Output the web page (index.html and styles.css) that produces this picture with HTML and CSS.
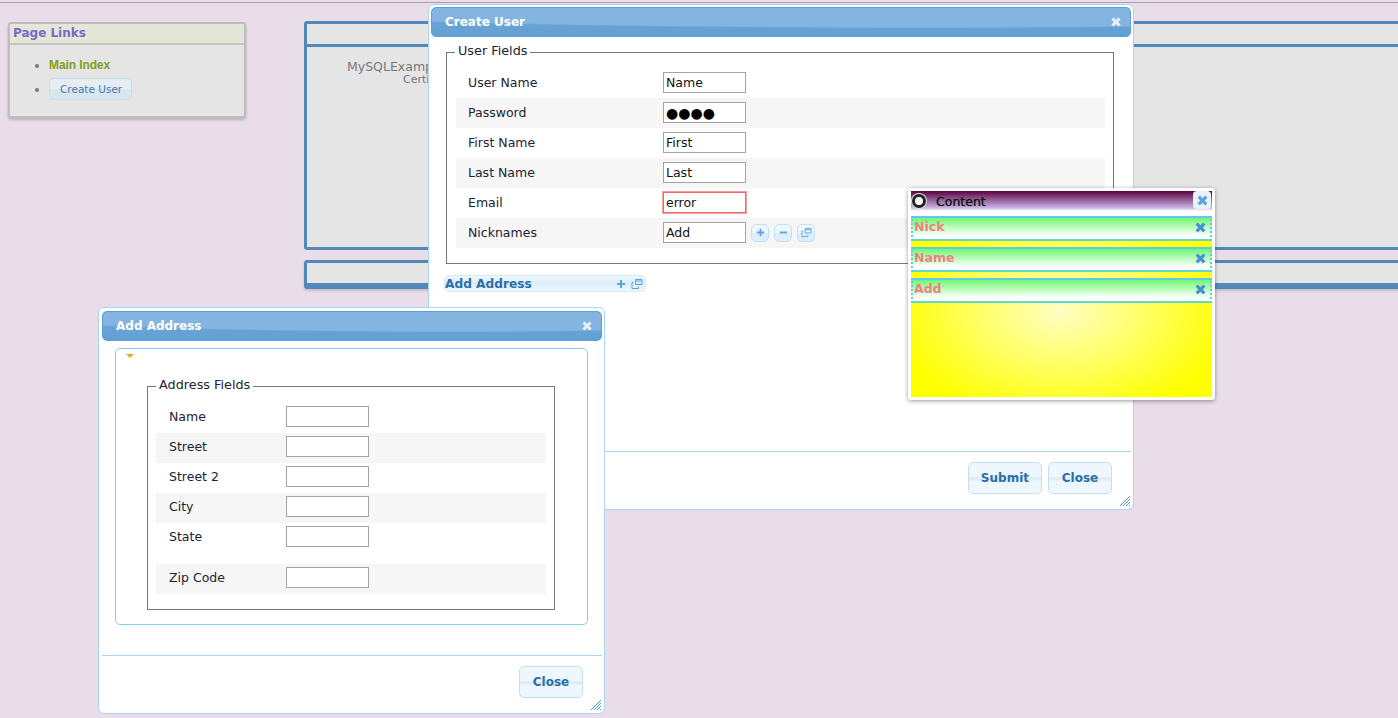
FILE: index.html
```html
<!DOCTYPE html>
<html lang="en">
<head>
  <meta charset="UTF-8">
  <title>Create User</title>
  <link rel="stylesheet" href="styles.css">
</head>
<body>
  <svg class="defs" width="0" height="0">
    <symbol id="i-close" viewBox="0 0 12 12"><path d="M2.500 2.500l7 7M9.500 2.500l-7 7" fill="none" stroke="currentColor" stroke-width="3"/></symbol>
    <symbol id="i-plus" viewBox="0 0 12 12"><path d="M6 2v8M2 6h8" fill="none" stroke="currentColor" stroke-width="2"/></symbol>
    <symbol id="i-minus" viewBox="0 0 12 12"><path d="M2 6h8" fill="none" stroke="currentColor" stroke-width="2"/></symbol>
    <symbol id="i-window" viewBox="0 0 12 12"><path d="M4.500 1.500h6.500v5h-6.500zM4.500 3h6.500M2.500 4.500h-1.500v6h6.500v-2" fill="none" stroke="currentColor"/></symbol>
    <symbol id="i-grip" viewBox="0 0 12 12"><path d="M1 11l10-10M4 11l7-7M7 11l4-4M10 11l1-1" fill="none" stroke="currentColor"/></symbol>
  </svg>

  <div class="top-rule"></div>
  <div class="page">
    <aside class="links">
      <h3 class="links-head">Page Links</h3>
      <ul class="links-list">
        <li><a class="link-main" href="#">Main Index</a></li>
        <li><a class="btn btn-small" href="#">Create User</a></li>
      </ul>
    </aside>
    <main class="content">
      <div class="panel">
        <div class="panel-head"></div>
        <div class="panel-body">
          <div class="app-name">MySQLExample</div>
          <div class="app-sub">Certificate</div>
        </div>
      </div>
      <div class="panel panel-foot"></div>
    </main>
  </div>

  <section class="dialog dialog-user">
    <header class="titlebar">
      <span>Create User</span>
      <svg class="title-close"><use href="#i-close"/></svg>
    </header>
    <div class="dialog-body">
      <fieldset class="fields">
        <legend>User Fields</legend>
        <div class="row"><label>User Name</label><input value="Name"></div>
        <div class="row"><label>Password</label><input class="dots" value="●●●●"></div>
        <div class="row"><label>First Name</label><input value="First"></div>
        <div class="row"><label>Last Name</label><input value="Last"></div>
        <div class="row"><label>Email</label><input class="error" value="error"></div>
        <div class="row">
          <label>Nicknames</label><input value="Add">
          <span class="tool"><svg><use href="#i-plus"/></svg></span>
          <span class="tool"><svg><use href="#i-minus"/></svg></span>
          <span class="tool"><svg><use href="#i-window"/></svg></span>
        </div>
      </fieldset>
      <div class="add-bar">
        <span class="add-name">Add Address</span>
        <svg class="add-icon"><use href="#i-plus"/></svg>
        <svg class="add-icon"><use href="#i-window"/></svg>
      </div>
    </div>
    <footer class="dialog-foot">
      <button class="btn">Submit</button>
      <button class="btn">Close</button>
    </footer>
    <svg class="grip"><use href="#i-grip"/></svg>
  </section>

  <section class="dialog dialog-address">
    <header class="titlebar">
      <span>Add Address</span>
      <svg class="title-close"><use href="#i-close"/></svg>
    </header>
    <div class="dialog-body">
      <div class="accordion">
        <span class="caret"></span>
        <fieldset class="fields">
          <legend>Address Fields</legend>
          <div class="row"><label>Name</label><input></div>
          <div class="row"><label>Street</label><input></div>
          <div class="row"><label>Street 2</label><input></div>
          <div class="row"><label>City</label><input></div>
          <div class="row row-tall"><label>State</label><input></div>
          <div class="row"><label>Zip Code</label><input></div>
        </fieldset>
      </div>
    </div>
    <footer class="dialog-foot">
      <button class="btn">Close</button>
    </footer>
    <svg class="grip"><use href="#i-grip"/></svg>
  </section>

  <section class="popup">
    <div class="popup-head">
      <span class="radio"></span>
      <span class="popup-title">Content</span>
      <span class="popup-close"><svg><use href="#i-close"/></svg></span>
    </div>
    <ul class="chips">
      <li class="chip"><span>Nick</span><svg><use href="#i-close"/></svg></li>
      <li class="chip"><span>Name</span><svg><use href="#i-close"/></svg></li>
      <li class="chip"><span>Add</span><svg><use href="#i-close"/></svg></li>
    </ul>
  </section>
</body>
</html>
```

FILE: styles.css
```css
html, body {
  margin: 0;
  padding: 0;
  height: 718px;
  overflow: hidden;
}

body {
  background: #e8dde8;
  font-family: "DejaVu Sans", sans-serif;
  font-size: 12px;
  color: #223;
  position: relative;
}

.defs {
  position: absolute;
}

.top-rule {
  height: 1px;
  margin-top: 2px;
  background: #a89fa8;
}

/* page behind the dialogs */
.page {
  display: flex;
  align-items: flex-start;
  gap: 58px;
  padding: 18px 0 0 8px;
}

.links {
  flex: none;
  width: 234px;
  height: 92px;
  margin-top: 1px;
  background: #e5e5e5;
  border: 2px solid #bdbdbd;
  border-radius: 3px;
  box-shadow: 0 2px 3px rgba(0, 0, 0, .2);
}

.links-head {
  margin: 0;
  height: 19px;
  padding-left: 3px;
  background: #e6e6d8;
  border-bottom: 2px solid #c4c4c4;
  color: #7b68c8;
  font-size: 12px;
  line-height: 19px;
}

.links-list {
  margin: 0;
  padding: 9px 0 0 39px;
  color: #777;
}

.links-list li {
  height: 24px;
  line-height: 22px;
}

.link-main {
  color: #7fa020;
  font-family: "Liberation Sans", sans-serif;
  font-weight: bold;
  font-size: 12px;
  letter-spacing: -.1px;
  text-decoration: none;
}

.content {
  flex: none;
  width: 1120px;
}

.panel {
  background: #e5e5e5;
  border: 3px solid #5289b8;
  border-radius: 3px;
  height: 223px;
}

.panel-head {
  height: 20px;
  border-bottom: 3px solid #5289b8;
}

.panel-body {
  padding-top: 12px;
  color: #777;
}

.app-name {
  padding-left: 40px;
  font-size: 12.500px;
  line-height: 15px;
}

.app-sub {
  padding-left: 96px;
  font-size: 11px;
  line-height: 11px;
}

.panel-foot {
  height: 20px;
  margin-top: 10px;
  border-bottom-width: 6px;
  box-shadow: 0 2px 3px rgba(0, 0, 0, .15);
}

/* windows */
.dialog {
  position: absolute;
  box-sizing: border-box;
  background: #fff;
  border: 1px solid #a9d6ee;
  border-radius: 6px;
  padding: 2px;
  display: flex;
  flex-direction: column;
}

.dialog-user {
  left: 428px;
  top: 4px;
  width: 706px;
  height: 506px;
}

.dialog-address {
  left: 98px;
  top: 307px;
  width: 507px;
  height: 407px;
  padding: 3px 2px 2px 3px;
}

.titlebar {
  flex: none;
  display: flex;
  align-items: center;
  justify-content: space-between;
  height: 28px;
  padding: 0 8px 0 13px;
  background:
    radial-gradient(ellipse 100% 72% at 70% 0, #84b4e0 94%, transparent 100%),
    linear-gradient(#70a9d8, #639fd4);
  border: 1px solid #5a9fd8;
  border-radius: 5px;
  color: #fff;
  font-weight: bold;
  font-size: 12px;
}

.title-close {
  width: 12px;
  height: 12px;
  color: #e8f1f8;
}

.dialog-body {
  flex: 1;
  min-height: 0;
}

.dialog-user .dialog-body {
  padding: 6px 17px 0 15px;
}

.dialog-address .dialog-body {
  padding: 7px 14px 0 13px;
}

.fields {
  margin: 0;
  padding: 6px 8px 15px 9px;
  border: 1px solid #777;
}

.fields legend {
  margin-left: -1px;
  padding: 0 3px 4px;
  font-size: 12.800px;
  line-height: 15px;
}

.row {
  display: flex;
  align-items: center;
  box-sizing: border-box;
  height: 30px;
  padding-bottom: 1px;
  font-size: 12.500px;
}

.row:nth-of-type(even) {
  background: #f6f6f6;
}

.row label {
  flex: none;
  width: 207px;
  padding-left: 12px;
  box-sizing: border-box;
}

.row input {
  flex: none;
  box-sizing: border-box;
  width: 83px;
  height: 21px;
  margin: 0;
  padding: 0 2px;
  border: 1px solid #a0a4a8;
  background: #fff;
  color: #111;
  font-family: inherit;
  font-size: 12.500px;
}

.row input.dots {
  font-size: 14px;
  color: #000;
}

.row input.error {
  border-color: #f0686c;
  box-shadow: 0 0 0 1px #f8a0a0;
}

.tool {
  display: flex;
  align-items: center;
  justify-content: center;
  box-sizing: border-box;
  width: 18px;
  height: 18px;
  margin-left: 5px;
  border: 1px solid #c4def2;
  border-radius: 5px;
  background: linear-gradient(#eef7fe 50%, #dcedfb 50%);
  color: #5da4d8;
}

.tool svg {
  width: 11px;
  height: 11px;
}

.add-bar {
  display: flex;
  align-items: center;
  box-sizing: border-box;
  width: 202px;
  height: 17px;
  margin: 11px 0 0 -2px;
  border: 1px solid #d6e9f8;
  border-radius: 5px;
  background: linear-gradient(#eef7fe, #dcedfb 50%, #eef7fe);
  color: #2c6ea6;
  font-weight: bold;
  font-size: 12.200px;
}

.add-name {
  flex: 1;
}

.add-icon {
  width: 12px;
  height: 12px;
  margin-right: 4px;
  color: #5da4d8;
}

.add-icon:last-child {
  margin-right: 2px;
}

.dialog-foot {
  flex: none;
  display: flex;
  justify-content: flex-end;
  gap: 6px;
  margin: 0;
  padding: 10px 19px 13px;
  border-top: 1px solid #a9d6ee;
}

.btn {
  display: inline-block;
  box-sizing: border-box;
  min-width: 64px;
  height: 32px;
  padding: 0 12px;
  border: 1px solid #c4def2;
  border-radius: 5px;
  background: linear-gradient(#eef7fe 45%, #d8eafa 52%, #eef7fe 62%);
  color: #2c6ea6;
  font-family: inherit;
  font-weight: bold;
  font-size: 12px;
}

.btn-small {
  height: 22px;
  padding: 0 9px 0 10px;
  color: #4a78a8;
  font-weight: normal;
  font-size: 10.500px;
  line-height: 20px;
  text-decoration: none;
  background: linear-gradient(#e6eef4 50%, #d8e6f0 50%);
}

.grip {
  position: absolute;
  right: 2px;
  bottom: 2px;
  width: 12px;
  height: 12px;
  color: #4a98d8;
}

.accordion {
  position: relative;
  box-sizing: border-box;
  height: 277px;
  padding: 28px 32px 0 31px;
  border: 1px solid #8accf0;
  border-radius: 5px;
}

.caret {
  position: absolute;
  left: 10px;
  top: 5px;
  border: 4px solid transparent;
  border-top: 4px solid #f5a623;
  border-bottom: 0;
}

.dialog-address .fields {
  padding: 7px 8px 15px 8px;
}

.dialog-address .fields legend {
  margin-left: 0;
}

.dialog-address .row {
  padding-bottom: 3px;
}

.dialog-address .row-tall {
  height: 41px;
  padding-bottom: 14px;
}

.dialog-address .row label {
  width: 130px;
  padding-left: 13px;
}

/* popup list */
.popup {
  position: absolute;
  left: 908px;
  top: 188px;
  box-sizing: border-box;
  width: 307px;
  height: 212px;
  border: 3px solid #fff;
  border-radius: 3px;
  box-shadow: 0 1px 4px rgba(0, 0, 0, .4);
  background:
    radial-gradient(ellipse 170px 110px at 150px 120px, #ffffc4, #ffff00) #ff0;
}

.popup-head {
  display: flex;
  align-items: center;
  height: 20px;
  background: linear-gradient(#5a0040, #cbb8e8 85%, #fff);
}

.radio {
  box-sizing: border-box;
  width: 14px;
  height: 14px;
  margin-left: 1px;
  border: 3px solid #222;
  border-radius: 50%;
  background: #fff;
  box-shadow: 0 0 0 1px #ddd;
}

.popup-title {
  flex: 1;
  margin-left: 10px;
  color: #111;
  font-size: 12.500px;
  text-shadow: 0 0 1px #333;
}

.popup-close {
  display: flex;
  align-items: center;
  justify-content: center;
  width: 18px;
  height: 18px;
  margin: 0 1px 2px 0;
  border-radius: 4px;
  background: #e8f2fb;
  color: #5da4d8;
}

.popup-close svg {
  width: 13px;
  height: 13px;
}

.chips {
  list-style: none;
  margin: 0;
  padding: 5px 0 0;
  background: linear-gradient(#fff 5px, transparent 5px);
}

.chip {
  display: flex;
  justify-content: space-between;
  box-sizing: border-box;
  height: 25px;
  margin-bottom: 6px;
  padding: 1px 3px 0 1px;
  border: 2px solid #60c8f0;
  border-left: 2px dotted #60c8f0;
  border-right: 2px dotted #60c8f0;
  border-bottom-color: #60d8d0;
  background: linear-gradient(#70f870, #fff 85%);
  color: #f08080;
  font-weight: bold;
  font-size: 12.500px;
}

.chip svg {
  width: 13px;
  height: 13px;
  margin-top: 2px;
  color: #4a90d8;
}
```
